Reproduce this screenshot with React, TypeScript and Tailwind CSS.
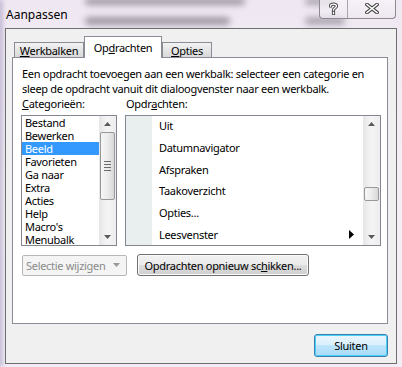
import type { ReactNode } from 'react';

const categories = ['Bestand', 'Bewerken', 'Beeld', 'Favorieten', 'Ga naar', 'Extra', 'Acties', 'Help', "Macro's", 'Menubalk'];
const commands = ['Uit', 'Datumnavigator', 'Afspraken', 'Taakoverzicht', 'Opties...', 'Leesvenster'];

function UpArrow() {
  return (
    <svg width="7" height="4" viewBox="0 0 7 4">
      <path d="M0 4 L3.5 0 L7 4 Z" fill="#5b5b5b" />
    </svg>
  );
}

function DownArrow({ color = '#5b5b5b' }: { color?: string }) {
  return (
    <svg width="7" height="4" viewBox="0 0 7 4">
      <path d="M0 0 L7 0 L3.5 4 Z" fill={color} />
    </svg>
  );
}

function ScrollBar({ thumbTop, thumbHeight, grip }: { thumbTop: number; thumbHeight: number; grip?: boolean }) {
  return (
    <div className="relative flex h-full w-[17px] flex-col items-center bg-gradient-to-r from-[#e6e6e6] via-[#f5f5f5] to-[#ededed]">
      <div className="flex h-[16px] w-full items-center justify-center">
        <UpArrow />
      </div>
      <div className="flex-1" />
      <div className="flex h-[16px] w-full items-center justify-center">
        <DownArrow />
      </div>
      <div
        className="absolute left-[1px] flex w-[15px] flex-col items-center justify-center gap-[2px] rounded-[2px] border border-[#989898] bg-gradient-to-r from-[#f6f6f6] via-[#ececec] to-[#d9d9d9]"
        style={{ top: thumbTop, height: thumbHeight }}
      >
        {grip && (
          <>
            <div className="h-px w-[7px] bg-[#6b6b6b]" />
            <div className="h-px w-[7px] bg-[#6b6b6b]" />
            <div className="h-px w-[7px] bg-[#6b6b6b]" />
            <div className="h-px w-[7px] bg-[#6b6b6b]" />
          </>
        )}
      </div>
    </div>
  );
}

function Tab({ active, children, width }: { active?: boolean; children: ReactNode; width: string }) {
  if (active) {
    return (
      <div className={`relative z-10 -mb-px flex h-[22px] ${width} items-start justify-center border border-b-0 border-[#898c95] bg-white pt-[3px]`}>
        {children}
      </div>
    );
  }
  return (
    <div className={`flex h-[15px] ${width} items-center justify-center border border-b-0 border-[#898c95] bg-gradient-to-b from-[#f2f2f2] to-[#d9d9d9] pt-px`}>
      {children}
    </div>
  );
}

export default function App() {
  return (
    <div className="relative h-[367px] w-[402px] overflow-hidden whitespace-nowrap bg-gradient-to-b from-[#efe8f2] via-[#f5eff6] to-[#f3eef6] font-['Segoe_UI','Noto_Sans',sans-serif] text-[11px] leading-[15px] tracking-[-0.3px] text-black">
      {/* blurred window behind the glass frame */}
      <div className="absolute left-[85px] top-[-2px] h-[7px] w-[160px] rounded-full bg-[#6a6470] opacity-60 blur-[3px]" />
      <div className="absolute left-[85px] top-[17px] h-[8px] w-[145px] rounded-full bg-[#6a6470] opacity-60 blur-[3px]" />
      <div className="absolute left-[305px] top-[-2px] h-[7px] w-[30px] rounded-full bg-[#6a6470] opacity-50 blur-[3px]" />
      <div className="absolute left-[305px] top-[17px] h-[8px] w-[40px] rounded-full bg-[#6a6470] opacity-50 blur-[3px]" />
      <div className="absolute left-[-3px] top-0 h-full w-[6px] bg-[#9a90b8] opacity-50 blur-[2px]" />

      <div className="relative flex h-[28px] items-start">
        <span className="ml-[6px] mt-[7px] text-[12px] tracking-normal">Aanpassen</span>
        <div className="ml-auto mr-[6px] mt-[-1px] flex h-[20px] overflow-hidden rounded-b-[4px] border border-t-0 border-[#8e8a92] bg-gradient-to-b from-[#faf7fb]/70 to-[#eee8f0]/70">
          <div className="flex w-[28px] items-center justify-center border-r border-[#a9a4ad]">
            <svg width="9" height="13" viewBox="0 0 9 13">
              <path d="M1.5 4 C1.5 1.5 7.5 1.5 7.5 4 C7.5 6 4.5 6 4.5 8 M4.5 10.5 L4.5 11.5" fill="none" stroke="#4a4a4a" strokeWidth="3.2" strokeLinecap="square" />
              <path d="M1.5 4 C1.5 1.5 7.5 1.5 7.5 4 C7.5 6 4.5 6 4.5 8 M4.5 10.5 L4.5 11.5" fill="none" stroke="#ffffff" strokeWidth="1.3" strokeLinecap="square" />
            </svg>
          </div>
          <div className="flex w-[47px] items-center justify-center">
            <svg width="14" height="11" viewBox="0 0 14 11">
              <path d="M2 1.5 L12 9.5 M12 1.5 L2 9.5" fill="none" stroke="#4a4a4a" strokeWidth="3.6" strokeLinecap="square" />
              <path d="M2 1.5 L12 9.5 M12 1.5 L2 9.5" fill="none" stroke="#ffffff" strokeWidth="1.6" strokeLinecap="square" />
            </svg>
          </div>
        </div>
      </div>

      <div className="relative ml-[5px] flex h-[336px] w-[392px] flex-col border border-[#6e6e6e] bg-[#f0f0f0]">
        <div className="ml-[6px] mt-[7px] flex flex-col">
          <div className="flex items-end pl-[2px]">
            <Tab width="w-[70px]">
              <span><u>W</u>erkbalken</span>
            </Tab>
            <Tab active width="w-[78px]">
              <span>Op<u>d</u>rachten</span>
            </Tab>
            <Tab width="w-[50px]">
              <span><u>O</u>pties</span>
            </Tab>
          </div>

          <div className="flex h-[267px] w-[376px] flex-col border border-[#898c95] bg-white">
            <p className="ml-[9px] mt-[8px]">
              Een opdracht toevoegen aan een werkbalk: selecteer een categorie en
              <br />
              sleep de opdracht vanuit dit dialoogvenster naar een werkbalk.
            </p>

            <div className="mt-px flex h-[14px] leading-[14px]">
              <span className="ml-[9px] w-[104px]"><u>C</u>ategorieën:</span>
              <span>Opdr<u>a</u>chten:</span>
            </div>

            <div className="mt-[4px] flex h-[131px]">
              <div className="ml-[8px] flex h-full w-[96px] border border-[#828790] bg-white">
                <div className="flex flex-1 flex-col">
                  {categories.map((c) => (
                    <div
                      key={c}
                      className={`h-[13px] pl-[3px] leading-[13px] ${c === 'Beeld' ? 'bg-[#3399ff] text-white' : ''}`}
                    >
                      {c}
                    </div>
                  ))}
                </div>
                <ScrollBar thumbTop={16} thumbHeight={68} grip />
              </div>

              <div className="ml-[8px] flex h-full w-[256px] border border-[#828790] bg-white">
                <div className="w-[26px] bg-[#e9eeee]" />
                <div className="-mt-[1px] flex flex-1 flex-col">
                  {commands.map((c) => (
                    <div key={c} className="flex h-[22px] items-center pl-[7px]">
                      <span>{c}</span>
                      {c === 'Leesvenster' && (
                        <svg className="ml-auto mr-[9px]" width="5" height="9" viewBox="0 0 5 9">
                          <path d="M0 0 L5 4.5 L0 9 Z" fill="#000" />
                        </svg>
                      )}
                    </div>
                  ))}
                </div>
                <ScrollBar thumbTop={71} thumbHeight={14} />
              </div>
            </div>

            <div className="mt-[8px] flex h-[22px] items-center">
              <div className="ml-[9px] flex h-[21px] w-[105px] items-center rounded-[2px] border border-[#b4b8bb] bg-[#f4f4f4] pl-[3px] pr-[6px] text-[#8a8a8a]">
                <span>Selectie wijzigen</span>
                <span className="ml-auto flex">
                  <DownArrow color="#9a9a9a" />
                </span>
              </div>
              <button className="ml-[10px] flex h-[22px] w-[172px] items-center justify-center rounded-[3px] border border-[#707070] bg-[linear-gradient(#f2f2f2_0%,#ebebeb_50%,#dddddd_50%,#cfcfcf_100%)] shadow-[inset_0_0_0_1px_#fbfbfb]">
                <span>Opdrachten opnieuw sc<u>h</u>ikken...</span>
              </button>
            </div>
          </div>
        </div>

        <div className="mr-[8px] mt-[10px] flex justify-end">
          <button className="flex h-[23px] w-[74px] items-center justify-center rounded-[3px] border border-[#3c7fb1] bg-[linear-gradient(#eaf6fd_0%,#d9f0fc_50%,#bee6fd_50%,#a7d9f5_100%)] shadow-[inset_0_0_0_1px_#48d0f5]">
            Sluiten
          </button>
        </div>
      </div>
    </div>
  );
}
